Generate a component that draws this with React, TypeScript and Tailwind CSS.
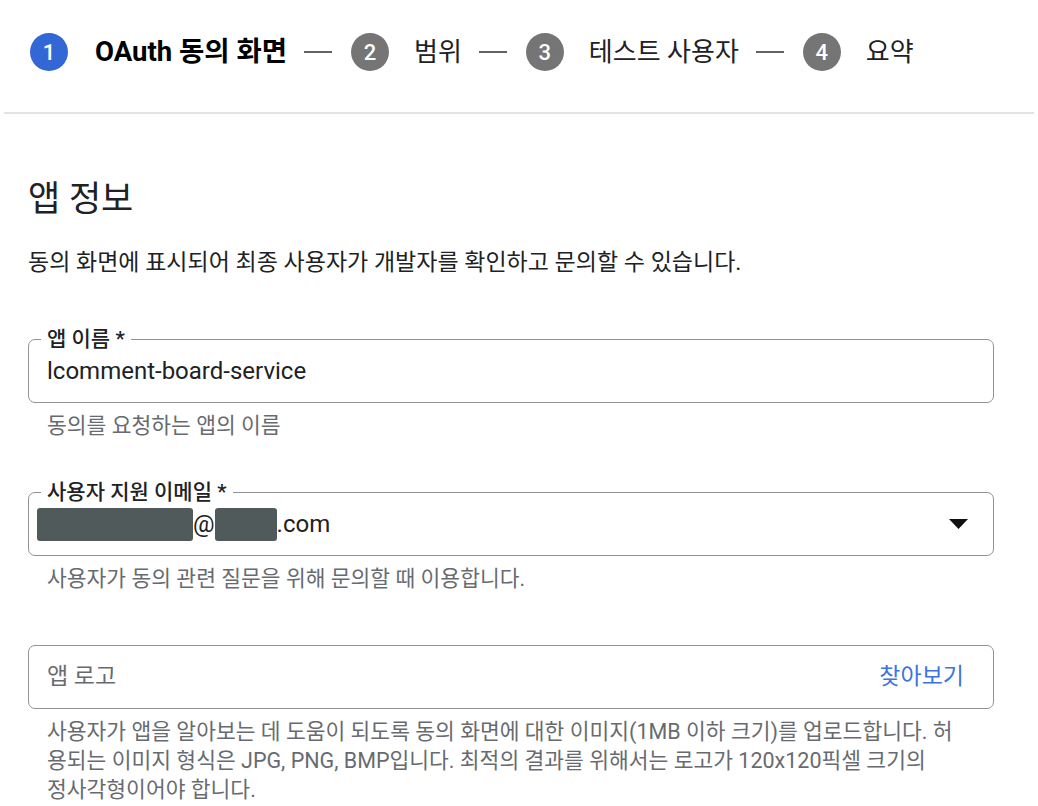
import React from "react"

const font = { fontFamily: "Roboto, 'Noto Sans CJK KR', 'Noto Sans', sans-serif" }

const steps = [
  { n: 1, label: "OAuth 동의 화면", active: true },
  { n: 2, label: "범위", active: false },
  { n: 3, label: "테스트 사용자", active: false },
  { n: 4, label: "요약", active: false },
]

function Stepper() {
  return (
    <div className="flex items-center pl-[30px] pt-[33px]">
      {steps.map((s, i) => (
        <React.Fragment key={s.n}>
          {i > 0 && <div className="ml-[17px] mr-[19px] h-[2px] w-[28px] bg-[#5f6368]" />}
          <div
            className={`flex h-[38px] w-[38px] items-center justify-center rounded-full text-[22px] font-medium text-white ${
              s.active ? "bg-[#3367d6]" : "bg-[#757575]"
            }`}
          >
            {s.n}
          </div>
          <span
            className={`leading-[38px] ${
              s.active ? "ml-[27px] text-[27.5px] font-bold text-black" : "ml-[25px] text-[26px] text-[#202124]"
            }`}
          >
            {s.label}
          </span>
        </React.Fragment>
      ))}
    </div>
  )
}

function Field({
  label,
  children,
  helper,
}: {
  label?: string
  children: React.ReactNode
  helper: React.ReactNode
}) {
  return (
    <div>
      <div className="relative flex h-[64px] items-center rounded-[7px] border-[1.5px] border-[#8f9499] pl-[18px] pr-[25px]">
        {label && (
          <span className="absolute left-[12px] top-[-14px] bg-white px-[6px] text-[21px] font-medium leading-[26px] text-[#202124]">
            {label}
          </span>
        )}
        {children}
      </div>
      <div className="mt-2 pl-[19px] text-[21.5px] leading-[29px] text-[#676b70]">{helper}</div>
    </div>
  )
}

export default function App() {
  return (
    <div className="min-h-screen w-full bg-white" style={font}>
      <Stepper />
      <div className="mx-[4px] mt-[41px] h-[2px] bg-[#e3e3e3]" />

      <div className="pl-[28px] pr-[44px]">
        <h1 className="mt-[66px] text-[35px] font-normal leading-[40px] text-[#202124]">앱 정보</h1>
        <p className="mt-[28px] text-[23px] leading-[30px] text-[#202124]">
          동의 화면에 표시되어 최종 사용자가 개발자를 확인하고 문의할 수 있습니다.
        </p>

        <div className="mt-[61px]">
          <Field label="앱 이름 *" helper="동의를 요청하는 앱의 이름">
            <span className="text-[24px] text-[#202124]">lcomment-board-service</span>
          </Field>
        </div>

        <div className="mt-[52px]">
          <Field label="사용자 지원 이메일 *" helper="사용자가 동의 관련 질문을 위해 문의할 때 이용합니다.">
            <div className="-ml-[10px] flex flex-1 items-center text-[24px] text-[#202124]">
              <span className="h-[33px] w-[156px] rounded-[3px] bg-[#505a5b]" />
              <span>@</span>
              <span className="h-[33px] w-[62px] rounded-[3px] bg-[#505a5b]" />
              <span>.com</span>
            </div>
            <svg width="19" height="10" viewBox="0 0 19 10">
              <path d="M0 0 L19 0 L9.5 10 Z" fill="#111" />
            </svg>
          </Field>
        </div>

        <div className="mt-[52px]">
          <Field
            helper={
              <>
                <span className="block whitespace-nowrap">
                  사용자가 앱을 알아보는 데 도움이 되도록 동의 화면에 대한 이미지(1MB 이하 크기)를 업로드합니다. 허
                </span>
                <span className="block whitespace-nowrap">
                  용되는 이미지 형식은 JPG, PNG, BMP입니다. 최적의 결과를 위해서는 로고가 120x120픽셀 크기의
                </span>
                <span className="block whitespace-nowrap">정사각형이어야 합니다.</span>
              </>
            }
          >
            <span className="flex-1 text-[23px] text-[#676b70]">앱 로고</span>
            <span className="mr-[4px] text-[23px] text-[#3b74e0]">찾아보기</span>
          </Field>
        </div>
      </div>
    </div>
  )
}
